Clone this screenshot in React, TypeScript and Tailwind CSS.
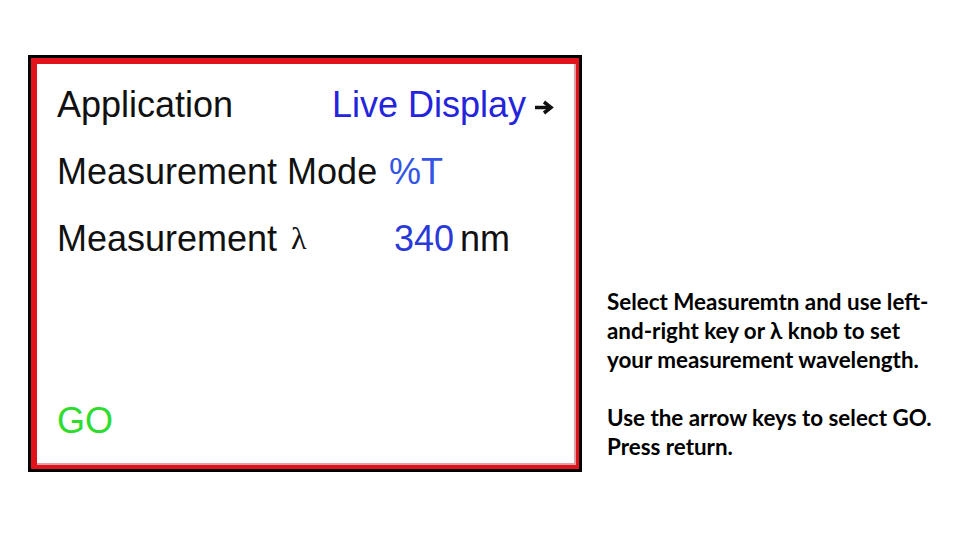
import React from "react";

function Arrow() {
  return (
    <svg width="21" height="15" viewBox="0 0 21 15" className="ml-[8px] self-center mt-[6px]">
      <line x1="1" y1="7.5" x2="16" y2="7.5" stroke="#111" strokeWidth="3.5" />
      <polyline points="10,2 17,7.5 10,13" fill="none" stroke="#111" strokeWidth="3.5" />
    </svg>
  );
}

export default function App() {
  const sans = { fontFamily: '"Liberation Sans", Arial, sans-serif' };
  return (
    <div className="w-[960px] h-[540px] bg-white flex items-start pl-[28px] pt-[55px]">
      <div className="w-[554px] h-[417px] bg-black p-[3px] shrink-0">
        <div className="w-full h-full border-t-[6px] border-l-[6px] border-r-[3px] border-b-[4px] border-[#e3131b]">
          <div
            className="w-full h-full bg-white border-r-2 border-b-2 border-[#dca2a8] flex flex-col justify-between pl-[20px] pt-[7px] pb-[9px] text-[36px] leading-[67px] text-[#111]"
            style={sans}
          >
            <div className="flex flex-col">
              <div className="flex items-start">
                <span className="w-[275px]">Application</span>
                <span className="text-[#2424dc]">Live Display</span>
                <Arrow />
              </div>
              <div className="flex items-start">
                <span className="w-[332px]">Measurement Mode</span>
                <span className="text-[#3355e6]">%T</span>
              </div>
              <div className="flex items-start">
                <span className="w-[234px]">Measurement</span>
                <span className="w-[103px] text-[32px]" style={{ fontFamily: '"Liberation Serif", serif' }}>λ</span>
                <span className="text-[#2a3ad8]">340</span>
                <span className="ml-[6px]">nm</span>
              </div>
            </div>
            <div className="text-[#2ddc2d]">GO</div>
          </div>
        </div>
      </div>
      <div
        className="ml-[25px] mt-[232px] text-[22.4px] leading-[29px] font-bold text-black"
        style={{ fontFamily: 'Lato, "Noto Sans", sans-serif' }}
      >
        <div>Select Measuremtn and use left-</div>
        <div>and-right key or λ knob to set</div>
        <div>your measurement wavelength.</div>
        <div>&nbsp;</div>
        <div>Use the arrow keys to select GO.</div>
        <div>Press return.</div>
      </div>
    </div>
  );
}
